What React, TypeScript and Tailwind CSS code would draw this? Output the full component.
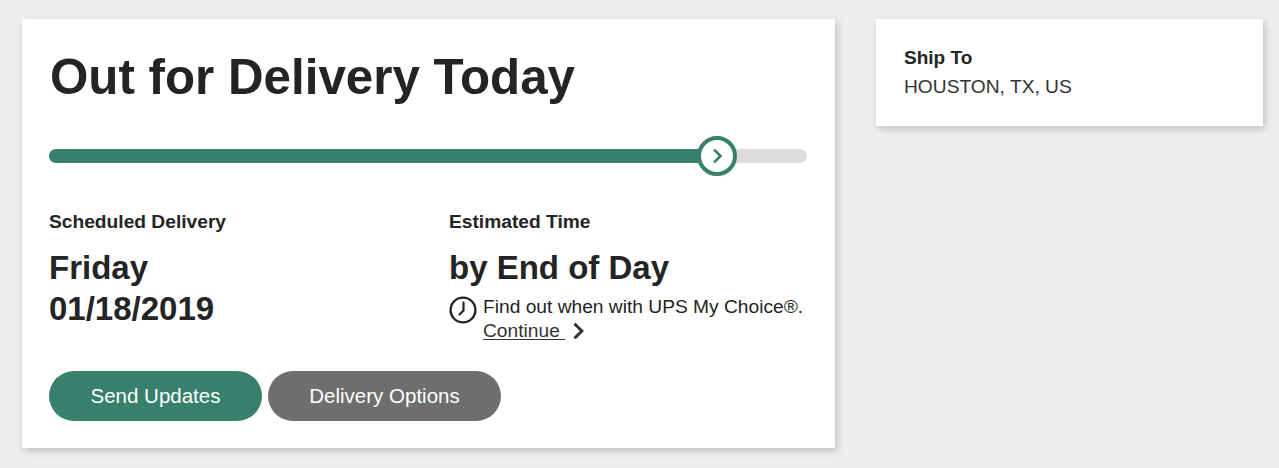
const FONT = "font-['Liberation_Sans',Arial,sans-serif]";

function ClockIcon() {
  return (
    <svg width="28" height="28" viewBox="0 0 28 28" fill="none" stroke="#242424" className="shrink-0">
      <circle cx="14" cy="14" r="12.4" strokeWidth="2.4" />
      <path d="M14.5 6.5v8L10.5 18.5" strokeWidth="2.2" strokeLinecap="round" strokeLinejoin="round" />
    </svg>
  );
}

function Chevron({ color, size }: { color: string; size: number }) {
  return (
    <svg width={size} height={size} viewBox="0 0 14 14" fill="none" stroke={color} strokeWidth="2.6">
      <path d="M4 1.5 9.5 7 4 12.5" strokeLinecap="square" strokeLinejoin="miter" />
    </svg>
  );
}

function ProgressBar() {
  return (
    <div className="relative mt-[40px] h-[14px] w-[758px] rounded-full bg-[#dcdcdc]">
      <div className="h-full w-[660px] rounded-l-full bg-[#37806b]" />
      <div className="absolute left-[648px] top-[-13px] flex h-[40px] w-[40px] items-center justify-center rounded-full border-[4px] border-[#37806b] bg-white pl-[2px]">
        <Chevron color="#37806b" size={14} />
      </div>
    </div>
  );
}

export default function App() {
  return (
    <div className={`${FONT} flex h-[468px] w-[1279px] items-start gap-[41px] overflow-hidden bg-[#eeeeee] pl-[22px] pt-[19px] text-[#242424]`}>
      {/* Tracking card */}
      <div className="h-[429px] w-[813px] bg-white pl-[27px] pt-[26px] shadow-[2px_3px_8px_rgba(0,0,0,0.2)]">
        <h1 className="pl-px text-[49.3px] font-bold leading-[64px]">Out for Delivery Today</h1>
        <ProgressBar />

        <div className="mt-[48px] flex">
          <div className="w-[400px]">
            <p className="text-[19.2px] font-bold leading-[22px]">Scheduled Delivery</p>
            <p className="mt-[14px] text-[33px] font-bold leading-[41px]">
              Friday
              <br />
              01/18/2019
            </p>
          </div>
          <div>
            <p className="text-[19.2px] font-bold leading-[22px]">Estimated Time</p>
            <p className="mt-[14px] text-[33px] font-bold leading-[41px]">by End of Day</p>
            <div className="mt-[7px] flex gap-[6px]">
              <div className="pt-px">
                <ClockIcon />
              </div>
              <div className="text-[19.2px] leading-[24px]">
                <p>Find out when with UPS My Choice®.</p>
                <a className="flex items-center gap-[6px] text-[#333333]">
                  <span className="underline underline-offset-2">Continue&nbsp;</span>
                  <Chevron color="#333333" size={16} />
                </a>
              </div>
            </div>
          </div>
        </div>

        <div className="mt-[28px] flex gap-[6px] text-[20.5px] text-white">
          <button type="button" className="h-[50px] w-[213px] rounded-full bg-[#37806b]">
            Send Updates
          </button>
          <button type="button" className="h-[50px] w-[233px] rounded-full bg-[#6e6e6e]">
            Delivery Options
          </button>
        </div>
      </div>

      {/* Ship to card */}
      <div className="h-[107px] w-[387px] bg-white pl-[28px] pt-[24px] text-[19px] leading-[29px] shadow-[2px_3px_8px_rgba(0,0,0,0.2)]">
        <p className="font-bold">Ship To</p>
        <p className="text-[19.2px] text-[#333333]">HOUSTON, TX, US</p>
      </div>
    </div>
  );
}
